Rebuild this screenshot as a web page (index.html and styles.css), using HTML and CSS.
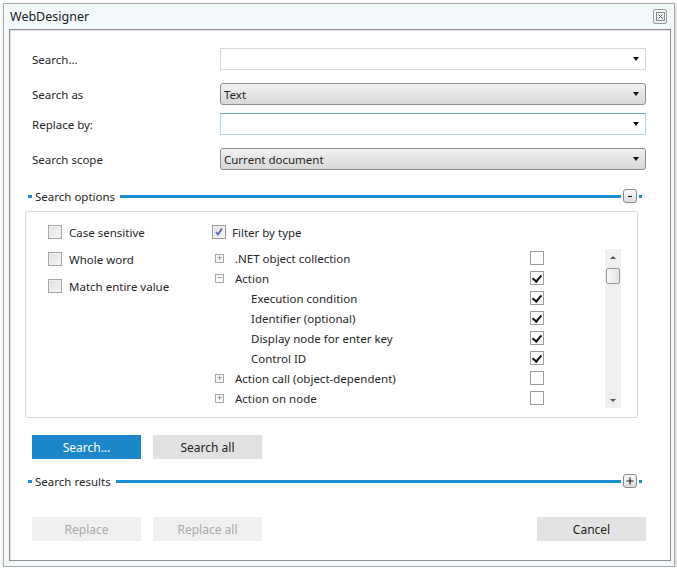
FILE: index.html
```html
<!DOCTYPE html>
<html lang="en">
<head>
  <meta charset="UTF-8" />
  <meta name="viewport" content="width=device-width, initial-scale=1" />
  <title>WebDesigner</title>
  <link rel="stylesheet" href="styles.css">
</head>
<body>
  <div class="window">
    <div class="titlebar">
      <span class="title">WebDesigner</span>
      <button type="button" class="close-btn" aria-label="Close">
        <svg width="9" height="9" viewBox="0 0 9 9">
          <rect x="0.5" y="0.5" width="8" height="8" fill="none" stroke="#8a8a8a" />
          <path d="M2.5 2.5 L6.5 6.5 M6.5 2.5 L2.5 6.5" stroke="#555" stroke-width="1" />
        </svg>
      </button>
    </div>

    <div class="content">
      <div class="form">
        <div class="form-row">
          <label class="field-label">Search...</label>
          <div class="combo combo-input"><span class="combo-text"></span><span class="arrow"></span></div>
        </div>
        <div class="form-row gap-lg">
          <label class="field-label">Search as</label>
          <div class="combo combo-select"><span class="combo-text">Text</span><span class="arrow"></span></div>
        </div>
        <div class="form-row">
          <label class="field-label">Replace by:</label>
          <div class="combo combo-input combo-focus"><span class="combo-text"></span><span class="arrow"></span></div>
        </div>
        <div class="form-row gap-lg">
          <label class="field-label">Search scope</label>
          <div class="combo combo-select"><span class="combo-text">Current document</span><span class="arrow"></span></div>
        </div>
      </div>

      <div class="section-head head-options">
        <span class="dash"></span>
        <span class="section-title">Search options</span>
        <span class="section-line"></span>
        <button type="button" class="toggle" aria-label="Collapse">
          <svg width="6" height="6" viewBox="0 0 6 6"><path d="M1 3.5 H5" stroke="#222" stroke-width="1.2" /></svg>
        </button>
        <span class="dash dash-end"></span>
      </div>

      <div class="options-panel">
        <div class="options-left">
          <div class="check-row"><span class="chk"></span><span>Case sensitive</span></div>
          <div class="check-row"><span class="chk"></span><span>Whole word</span></div>
          <div class="check-row"><span class="chk"></span><span>Match entire value</span></div>
        </div>

        <div class="options-right">
          <div class="check-row filter-row">
            <span class="chk chk-filter">
              <svg width="12" height="12" viewBox="0 0 12 12"><path d="M3 6 L5 8.5 L9 2.5" fill="none" stroke="#5a68b0" stroke-width="1.8" /></svg>
            </span>
            <span>Filter by type</span>
          </div>

          <div class="tree-box">
            <div class="tree">
              <div class="node"><span class="expander">+</span><span class="node-name">.NET object collection</span><span class="tchk"></span></div>
              <div class="node"><span class="expander">&minus;</span><span class="node-name">Action</span><span class="tchk checked"></span></div>
              <div class="node child"><span class="node-name">Execution condition</span><span class="tchk checked"></span></div>
              <div class="node child"><span class="node-name">Identifier (optional)</span><span class="tchk checked"></span></div>
              <div class="node child"><span class="node-name">Display node for enter key</span><span class="tchk checked"></span></div>
              <div class="node child"><span class="node-name">Control ID</span><span class="tchk checked"></span></div>
              <div class="node"><span class="expander">+</span><span class="node-name">Action call (object-dependent)</span><span class="tchk"></span></div>
              <div class="node"><span class="expander">+</span><span class="node-name">Action on node</span><span class="tchk"></span></div>
            </div>
            <div class="scrollbar">
              <span class="sb-arrow sb-up"></span>
              <span class="sb-thumb"></span>
              <span class="sb-space"></span>
              <span class="sb-arrow sb-down"></span>
            </div>
          </div>
        </div>
      </div>

      <div class="button-row">
        <button type="button" class="btn btn-primary">Search...</button>
        <button type="button" class="btn">Search all</button>
      </div>

      <div class="section-head head-results">
        <span class="dash"></span>
        <span class="section-title">Search results</span>
        <span class="section-line"></span>
        <button type="button" class="toggle" aria-label="Expand">
          <svg width="8" height="8" viewBox="0 0 8 8"><path d="M0.5 4 H7.5 M4 0.5 V7.5" stroke="#222" stroke-width="1.2" /></svg>
        </button>
        <span class="dash dash-end"></span>
      </div>

      <div class="button-row footer">
        <button type="button" class="btn btn-disabled">Replace</button>
        <button type="button" class="btn btn-disabled">Replace all</button>
        <button type="button" class="btn btn-cancel">Cancel</button>
      </div>
    </div>
  </div>
</body>
</html>
```

FILE: styles.css
```css
* {
  margin: 0;
  padding: 0;
  box-sizing: border-box;
}
body {
  background: #fff;
  font-family: "Noto Sans", "Liberation Sans", sans-serif;
  font-size: 11.5px;
  color: #262626;
}
button {
  font-family: inherit;
  font-size: inherit;
  border: none;
  cursor: pointer;
}

/* window frame */
.window {
  margin: 3px 0 0 3px;
  width: 672px;
  height: 564px;
  border: 1px solid #a9a9a9;
  background: #f3f9fb;
  padding: 0 3px 5px 5px;
  box-shadow: 1px 2px 4px rgba(0, 0, 0, 0.25);
  display: flex;
  flex-direction: column;
}
.titlebar {
  height: 25px;
  display: flex;
  align-items: center;
  justify-content: space-between;
  padding: 0 4px 0 1px;
}
.title {
  font-size: 12.5px;
  color: #1a1a1a;
}
.close-btn {
  width: 14px;
  height: 15px;
  border: 1px solid #9a9a9a;
  border-radius: 2px;
  background: linear-gradient(#fdfdfd, #e9eef0);
  display: flex;
  align-items: center;
  justify-content: center;
}
.content {
  flex: 1;
  background: #fff;
  border: 1px solid #8f8f8f;
  box-shadow: inset 1px 1px 0 #e2e2e2;
  display: flex;
  flex-direction: column;
}

/* form */
.form {
  padding: 18px 0 0 22px;
}
.form-row {
  display: flex;
  align-items: center;
  margin-top: 8px;
}
.form-row:first-child {
  margin-top: 0;
}
.form-row.gap-lg {
  margin-top: 13px;
}
.field-label {
  width: 188px;
}
.combo {
  width: 426px;
  height: 22px;
  display: flex;
  align-items: center;
  padding: 0 6px 0 3px;
}
.combo-input {
  border: 1px solid #d6d6d6;
  background: #fff;
}
.combo-focus {
  border-color: #b4d2ec;
  border-top-color: #6fa7d8;
}
.combo-select {
  border: 1px solid #8d8d8d;
  border-radius: 3px;
  background: linear-gradient(#f3f3f3, #e4e4e4 50%, #d9d9d9);
}
.combo-text {
  flex: 1;
}
.arrow {
  width: 0;
  height: 0;
  border-left: 3.5px solid transparent;
  border-right: 3.5px solid transparent;
  border-top: 4px solid #111;
}

/* section headers */
.section-head {
  display: flex;
  align-items: center;
  height: 14px;
  margin: 19px 28px 0 18px;
}
.head-results {
  margin-top: 15px;
}
.dash {
  width: 4px;
  height: 3px;
  background: #1b8fcf;
}
.dash-end {
  width: 3px;
  margin-left: 2px;
}
.section-title {
  margin-left: 3px;
}
.section-line {
  flex: 1;
  height: 3px;
  background: #1b8fcf;
  margin: 0 2px 0 5px;
}
.toggle {
  width: 14px;
  height: 14px;
  border: 1px solid #8a8a8a;
  border-radius: 3px;
  background: linear-gradient(#fbfbfb, #dcdcdc);
  display: flex;
  align-items: center;
  justify-content: center;
}

/* options panel */
.options-panel {
  margin: 8px 0 0 15px;
  width: 613px;
  height: 207px;
  border: 1px solid #dadada;
  border-radius: 2px;
  display: grid;
  grid-template-columns: 164px 1fr;
  padding: 13px 16px 0 22px;
}
.options-left {
  display: flex;
  flex-direction: column;
  gap: 13px;
}
.check-row {
  display: flex;
  align-items: center;
  gap: 7px;
  height: 14px;
}
.chk {
  width: 14px;
  height: 14px;
  border: 1px solid #a6a6a6;
  background: linear-gradient(135deg, #dedede, #f7f7f7);
  box-shadow: inset 0 0 0 1px #f1f1f1;
}
.chk-filter {
  display: flex;
  align-items: center;
  justify-content: center;
  border-color: #9a9a9a;
}
.filter-row {
  gap: 6px;
}

/* tree */
.tree-box {
  display: flex;
  margin-top: 9px;
  height: 160px;
}
.tree {
  flex: 1;
  overflow: hidden;
}
.node {
  display: flex;
  align-items: center;
  height: 20px;
  padding-left: 3px;
  padding-right: 61px;
}
.node.child {
  padding-left: 39px;
}
.expander {
  width: 9px;
  height: 9px;
  border: 1px solid #a8a8a8;
  margin-right: 11px;
  font-size: 9px;
  line-height: 6px;
  text-align: center;
  color: #777;
  background: #f8f8f8;
}
.node-name {
  flex: 1;
}
.tchk {
  width: 14px;
  height: 14px;
  border: 1px solid #9c9c9c;
  background: #fff;
  position: relative;
}
.tchk.checked::after {
  content: "";
  position: absolute;
  left: 3px;
  top: 1px;
  width: 4px;
  height: 7px;
  border-right: 2px solid #111;
  border-bottom: 2px solid #111;
  transform: rotate(40deg);
}
.scrollbar {
  width: 16px;
  margin-top: 1px;
  background: #efefef;
  display: flex;
  flex-direction: column;
  align-items: center;
}
.sb-arrow {
  height: 16px;
  width: 16px;
  display: flex;
  align-items: center;
  justify-content: center;
}
.sb-arrow::before {
  content: "";
  border-left: 3px solid transparent;
  border-right: 3px solid transparent;
}
.sb-up::before {
  border-bottom: 3px solid #555;
}
.sb-down::before {
  border-top: 3px solid #555;
}
.sb-thumb {
  width: 14px;
  height: 16px;
  margin-top: 3px;
  border: 1px solid #9a9a9a;
  border-radius: 2px;
  background: linear-gradient(90deg, #fafafa, #e2e2e2);
}
.sb-space {
  flex: 1;
}

/* buttons */
.button-row {
  display: flex;
  gap: 12px;
  margin: 17px 0 0 22px;
}
.btn {
  width: 109px;
  height: 24px;
  background: #e1e1e1;
  color: #222;
  font-size: 12px;
}
.btn-primary {
  background: #1b87c9;
  color: #fff;
}
.btn-disabled {
  background: #efefef;
  color: #ababab;
}
.footer {
  margin-top: 29px;
  padding-right: 24px;
}
.btn-cancel {
  margin-left: auto;
  background: #e3e3e3;
}
```
